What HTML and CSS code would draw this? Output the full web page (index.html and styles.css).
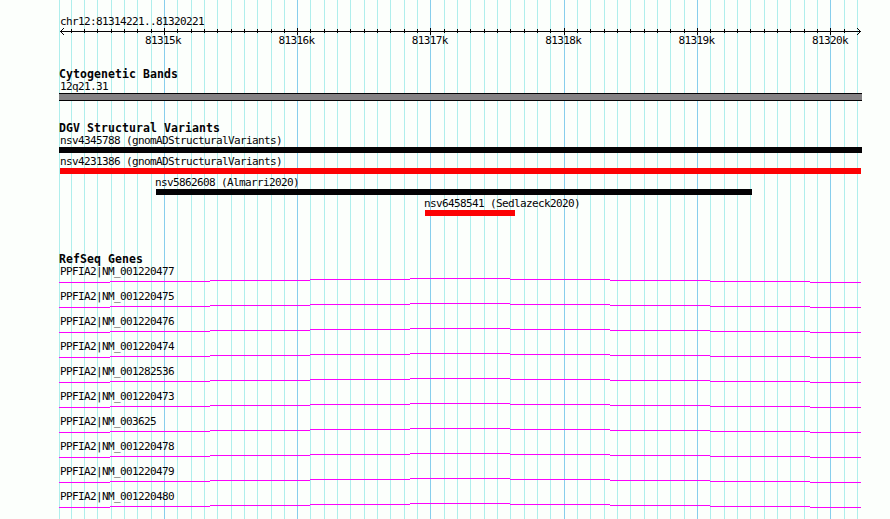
FILE: index.html
```html
<!DOCTYPE html>
<html lang="en">
<head>
    <meta charset="UTF-8">
    <meta name="viewport" content="width=device-width, initial-scale=1.0">
    <link rel="stylesheet" href="styles.css">
    <title>chr12:81314221..81320221</title>
</head>
<body>
<div class="browser">
    <svg class="grid" width="890" height="519" shape-rendering="crispEdges">
        <path id="minorLines" class="minor" d=""/>
        <path id="majorLines" class="major" d=""/>
    </svg>

    <div class="panel">
        <div class="region">chr12:81314221..81320221</div>
        <svg class="ruler" width="803" height="8" shape-rendering="crispEdges">
            <path d="M1 4.5H802"/>
            <path d="M2 3.5h1M3 2.5h1M4 1.5h1M2 5.5h1M3 6.5h1M4 7.5h1"/>
            <path d="M800 3.5h1M799 2.5h1M798 1.5h1M800 5.5h1M799 6.5h1M798 7.5h1"/>
            <path id="ticks" d=""/>
        </svg>
        <div class="scale">
            <span>81315k</span>
            <span>81316k</span>
            <span>81317k</span>
            <span>81318k</span>
            <span>81319k</span>
            <span>81320k</span>
        </div>

        <section class="track cyto">
            <h2>Cytogenetic Bands</h2>
            <div class="label">12q21.31</div>
            <div class="band"></div>
        </section>

        <section class="track variants">
            <h2>DGV Structural Variants</h2>
            <div class="variant full">
                <div class="label">nsv4345788 (gnomADStructuralVariants)</div>
                <div class="bar gain"></div>
            </div>
            <div class="variant nsv4231386">
                <div class="label">nsv4231386 (gnomADStructuralVariants)</div>
                <div class="bar loss"></div>
            </div>
            <div class="variant nsv5862608">
                <div class="label">nsv5862608 (Almarri2020)</div>
                <div class="bar gain"></div>
            </div>
            <div class="variant nsv6458541">
                <div class="label">nsv6458541 (Sedlazeck2020)</div>
                <div class="bar loss"></div>
            </div>
        </section>

        <section class="track genes" id="genes">
            <h2>RefSeq Genes</h2>
        </section>
    </div>
</div>

<script>
    const genes = [
        "NM_001220477", "NM_001220475", "NM_001220476", "NM_001220474", "NM_001282536",
        "NM_001220473", "NM_003625", "NM_001220478", "NM_001220479", "NM_001220480"
    ];

    // one line every 100 bases, a major one every 1000
    let minor = "M59.5 0V519";
    let major = "";
    let ticks = "";
    for (let i = 0; i < 60; i++) {
        const x = Math.round(70.53 + 13.3315 * i) + 0.5;
        if (i % 10 === 7) {
            major += `M${x} 0V519`;
            ticks += `M${x - 59} 1v7`;
        } else {
            minor += `M${x} 0V519`;
            if (i < 59) ticks += `M${x - 59} 2v4`;
        }
    }
    document.getElementById("minorLines").setAttribute("d", minor);
    document.getElementById("majorLines").setAttribute("d", major);
    document.getElementById("ticks").setAttribute("d", ticks);

    // intron line rises one pixel per segment to the middle and falls back
    const intron = "M0 4.5H51M51 3.5H151M151 2.5H251M251 1.5H351M351 .5H451" +
        "M451 1.5H551M551 2.5H651M651 3.5H751M751 4.5H802";
    document.getElementById("genes").innerHTML += genes.map(name => `
        <div class="gene">
            <div class="label">PPFIA2|${name}</div>
            <svg class="intron" width="803" height="5" shape-rendering="crispEdges"><path d="${intron}"/></svg>
        </div>`).join("");
</script>
</body>
</html>
```
FILE: styles.css
```css
body {
    margin: 0;
    background: #fcfffc;
    color: #040204;
    font-family: "DejaVu Sans Mono", "Liberation Mono", monospace;
    font-size: 11px;
    line-height: 14px;
    letter-spacing: -0.622px;
}

svg {
    display: block;
    fill: none;
}

.browser {
    position: relative;
    width: 890px;
    height: 519px;
    overflow: hidden;
}

.grid {
    position: absolute;
    top: 0;
    left: 0;
}

.minor {
    stroke: #afeeec;
}

.major {
    stroke: #87ceec;
}

.panel {
    position: relative;
    box-sizing: border-box;
    width: 862px;
    padding: 15px 0 0 59px;
}

.region,
.label {
    height: 12px;
    padding-left: 1px;
    white-space: nowrap;
}

.ruler {
    stroke: #040204;
}

.scale {
    display: flex;
    justify-content: space-between;
    height: 12px;
    margin: -1px 14px 0 86px;
}

h2 {
    height: 12px;
    margin: 0;
    font-size: 11.5px;
    font-weight: bold;
    line-height: 12px;
    letter-spacing: 0.077px;
}

.cyto {
    margin-top: 22px;
}

.band {
    height: 6px;
    margin-top: 1px;
    background: #848284;
    border-top: 1px solid #040204;
    border-bottom: 1px solid #040204;
}

.variants {
    margin-top: 21px;
}

.variant {
    height: 21px;
}

.bar {
    height: 6px;
    margin-top: 1px;
}

.gain {
    background: #040204;
}

.loss {
    background: #fc0204;
}

.nsv4231386 {
    margin: 0 1px;
}

.nsv4231386 .label {
    padding-left: 0;
}

.nsv5862608 {
    width: 596px;
    margin-left: 97px;
}

.nsv6458541 {
    width: 90px;
    margin-left: 366px;
}

.nsv5862608 .label,
.nsv6458541 .label {
    padding-left: 0;
    margin-left: -1px;
}

.genes {
    margin-top: 35px;
}

.gene {
    height: 25px;
}

.intron {
    margin-top: 1px;
    stroke: #fc02fc;
}
```
